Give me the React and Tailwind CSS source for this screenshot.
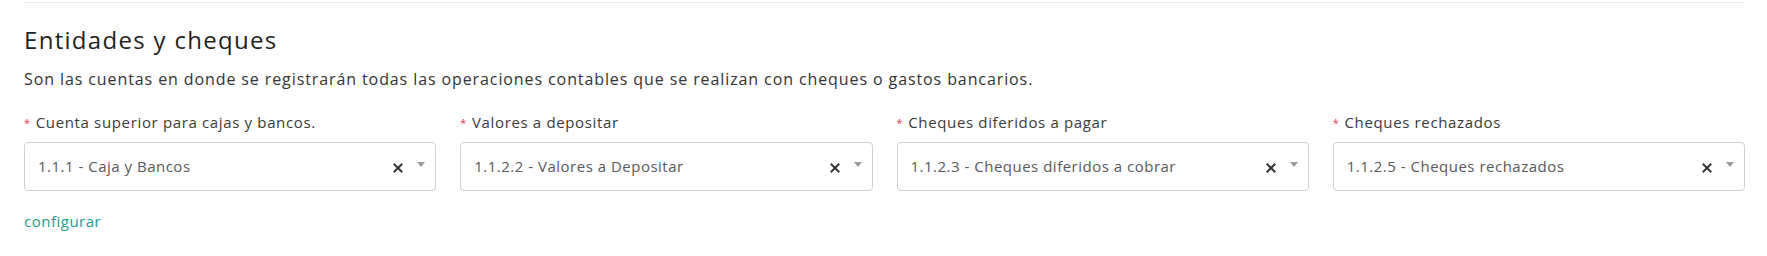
import React from "react";

const fields = [
  { label: "Cuenta superior para cajas y bancos.", value: "1.1.1 - Caja y Bancos" },
  { label: "Valores a depositar", value: "1.1.2.2 - Valores a Depositar" },
  { label: "Cheques diferidos a pagar", value: "1.1.2.3 - Cheques diferidos a cobrar" },
  { label: "Cheques rechazados", value: "1.1.2.5 - Cheques rechazados" },
];

function Field({ label, value }) {
  return (
    <div className="flex flex-col">
      <label className="flex items-center text-[15px] leading-[22px] tracking-[0.65px] text-[#3a3a3a]">
        <span className="mr-[5px] text-[11px] leading-none text-[#e8345d]">*</span>
        {label}
      </label>
      <div className="mt-[9px] flex h-[49px] items-center rounded-[4px] border border-[#cfcfcf] bg-white pl-[13px] pr-[10px]">
        <span className="flex-1 truncate text-[15px] tracking-[0.5px] text-[#595959]">{value}</span>
        <svg width="10" height="10" viewBox="0 0 10 10" className="mr-[14px] mt-[2px]">
          <path d="M1.5 1.5 L8.5 8.5 M8.5 1.5 L1.5 8.5" stroke="#333" strokeWidth="2" strokeLinecap="square" />
        </svg>
        <svg width="8" height="5" viewBox="0 0 8 5" className="-mt-[4px]">
          <path d="M0 0 H8 L4 5 Z" fill="#9a9a9a" />
        </svg>
      </div>
    </div>
  );
}

export default function App() {
  return (
    <div className="w-full bg-white pl-6 pr-[22px] pt-[2px]" style={{ fontFamily: '"Open Sans", "Liberation Sans", sans-serif' }}>
      <div className="border-t border-[#e6ebf0]" />
      <h2 className="mt-[21px] text-[24px] leading-[32px] font-normal tracking-[1.3px] text-[#1f1f1f]">Entidades y cheques</h2>
      <p className="mt-[11px] text-[16px] leading-[24px] tracking-[0.9px] text-[#333333]">
        Son las cuentas en donde se registrarán todas las operaciones contables que se realizan con cheques o gastos bancarios.
      </p>
      <div className="mt-[20px] grid grid-cols-4 gap-6">
        {fields.map((f) => (
          <Field key={f.label} label={f.label} value={f.value} />
        ))}
      </div>
      <div className="mt-[18px] pb-[26px]">
        <a className="text-[15px] leading-[22px] tracking-[0.5px] text-[#16a08a]">configurar</a>
      </div>
    </div>
  );
}
